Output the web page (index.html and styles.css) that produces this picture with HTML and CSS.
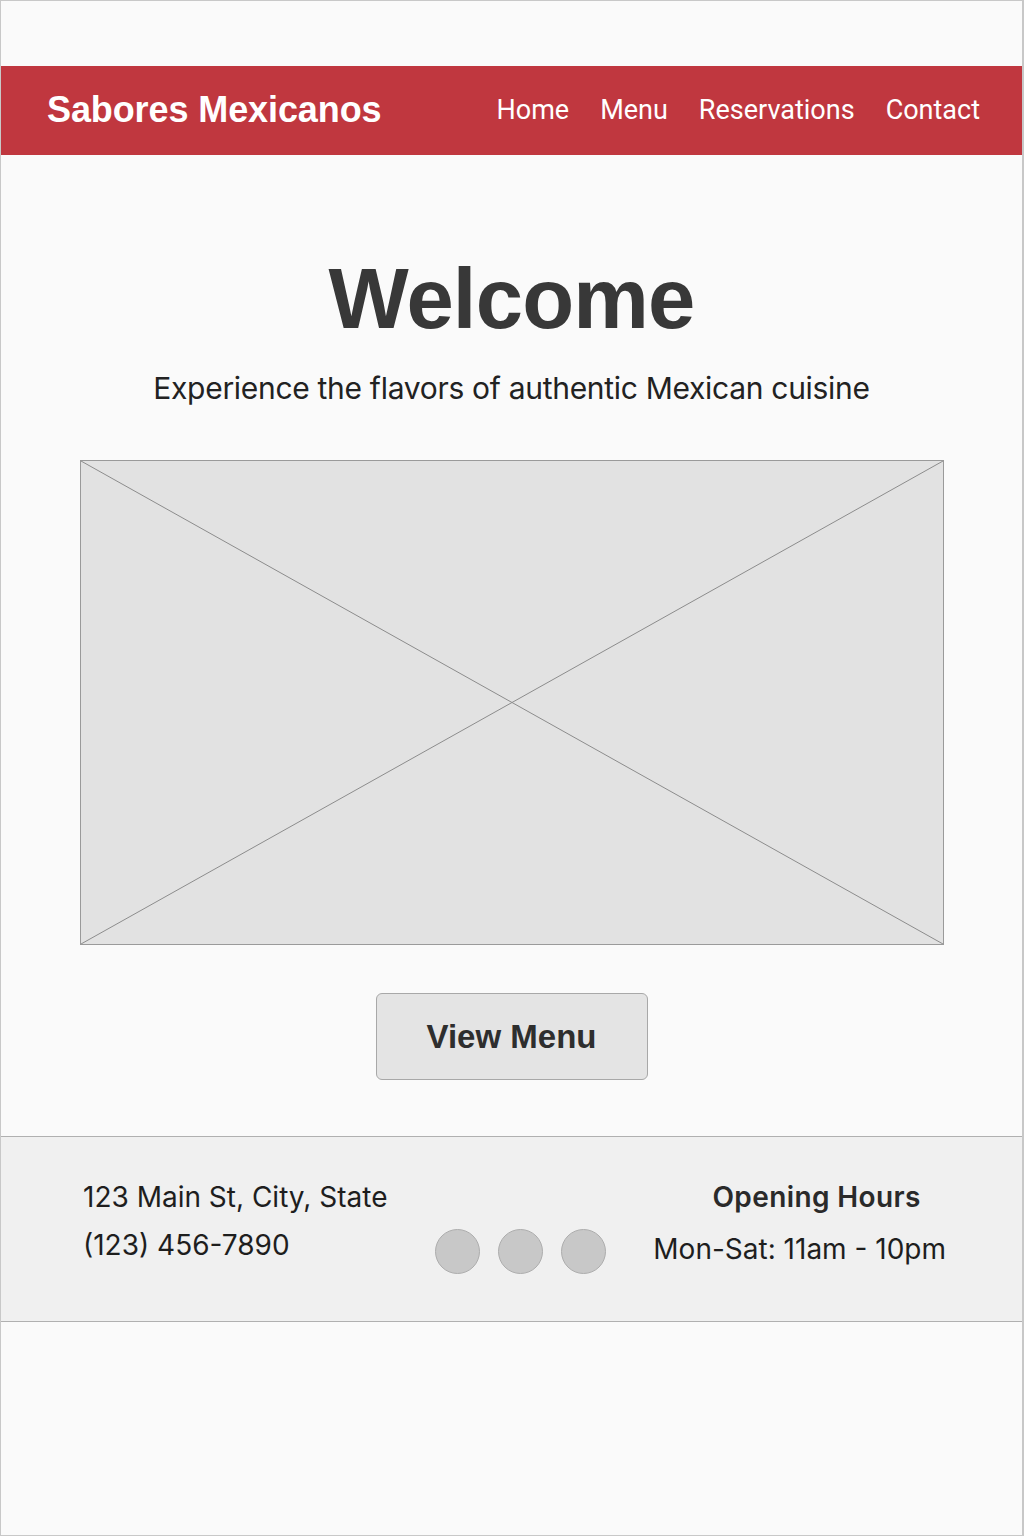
FILE: index.html
```html
<!DOCTYPE html>
<html lang="en">
<head>
<meta charset="utf-8">
<title>Sabores Mexicanos</title>
<link rel="stylesheet" href="styles.css">
</head>
<body>
<div class="page">
  <header class="topbar">
    <div class="brand">Sabores Mexicanos</div>
    <nav class="nav">
      <a href="#">Home</a>
      <a href="#">Menu</a>
      <a href="#">Reservations</a>
      <a href="#">Contact</a>
    </nav>
  </header>
  <main class="hero">
    <h1 class="title">Welcome</h1>
    <p class="subtitle">Experience the flavors of authentic Mexican cuisine</p>
    <div class="placeholder">
      <svg viewBox="0 0 100 100" preserveAspectRatio="none" class="cross">
        <line x1="0" y1="0" x2="100" y2="100" vector-effect="non-scaling-stroke"/>
        <line x1="100" y1="0" x2="0" y2="100" vector-effect="non-scaling-stroke"/>
      </svg>
    </div>
    <button class="btn">View Menu</button>
  </main>
  <footer class="footer">
    <div class="contact">
      <div>123 Main St, City, State</div>
      <div>(123) 456-7890</div>
    </div>
    <div class="social">
      <span class="dot"></span><span class="dot"></span><span class="dot"></span>
    </div>
    <div class="hours">
      <div class="hours-title">Opening Hours</div>
      <div>Mon-Sat: 11am - 10pm</div>
    </div>
  </footer>
</div>
</body>
</html>
```
FILE: styles.css
```css
* { box-sizing: border-box; }
html, body { margin: 0; padding: 0; background: #fafafa; }
.page {
  width: 1024px;
  height: 1536px;
  border: 1px solid #c8c8c8;
  border-right-width: 2px;
  background: #fafafa;
  padding-top: 65px;
  font-family: "Inter", "Liberation Sans", sans-serif;
}
.topbar {
  height: 89px;
  background: #c0373f;
  display: flex;
  align-items: center;
  justify-content: space-between;
  padding: 0 42px 0 46px;
}
.brand {
  font-family: "Liberation Sans", Arial, sans-serif;
  font-weight: bold;
  font-size: 36px;
  color: #fff;
  letter-spacing: -0.1px;
  margin-top: -2px;
}
.nav { display: flex; gap: 31px; margin-top: -2px; }
.nav a {
  font-family: "Roboto", "Liberation Sans", sans-serif;
  color: #fff;
  text-decoration: none;
  font-size: 27px;
}
.hero {
  display: flex;
  flex-direction: column;
  align-items: center;
  padding-top: 96px;
  height: 981px;
}
.title {
  margin: 0;
  font-family: "Liberation Sans", Arial, sans-serif;
  font-weight: bold;
  font-size: 85px;
  line-height: 96px;
  color: #383838;
  letter-spacing: -0.8px;
}
.subtitle {
  margin: 23px 0 0;
  font-size: 30px;
  line-height: 36px;
  color: #222;
  font-weight: 400;
  letter-spacing: -0.3px;
}
.placeholder {
  margin-top: 54px;
  width: 864px;
  height: 485px;
  background: #e2e2e2;
  border: 1px solid #9a9a9a;
  position: relative;
}
.cross { position: absolute; inset: 0; width: 100%; height: 100%; }
.cross line { stroke: #8c8c8c; stroke-width: 1; }
.btn {
  margin-top: 48px;
  width: 272px;
  height: 87px;
  background: #e4e4e4;
  border: 1px solid #a8a8a8;
  border-radius: 6px;
  font-family: "Liberation Sans", Arial, sans-serif;
  font-weight: bold;
  font-size: 33px;
  color: #2e2e2e;
}
.footer {
  height: 186px;
  background: #f0f0f0;
  border-top: 1px solid #b0b0b0;
  border-bottom: 1px solid #b0b0b0;
  display: flex;
  align-items: center;
  padding: 0 76px 0 82px;
  font-size: 28px;
  line-height: 36px;
  color: #1e1e1e;
}
.contact { display: flex; flex-direction: column; gap: 12px; margin-top: -17px; width: 352px; }
.social { display: flex; gap: 18px; margin-top: 44px; }
.dot {
  width: 45px; height: 45px;
  border-radius: 50%;
  background: #c8c8c8;
  border: 1px solid #adadad;
}
.hours { margin-left: auto; display: flex; flex-direction: column; align-items: center; gap: 16px; margin-top: -13px; }
.hours-title { font-weight: 600; color: #2a2a2a; letter-spacing: 0.4px; margin-left: 34px; }
```
